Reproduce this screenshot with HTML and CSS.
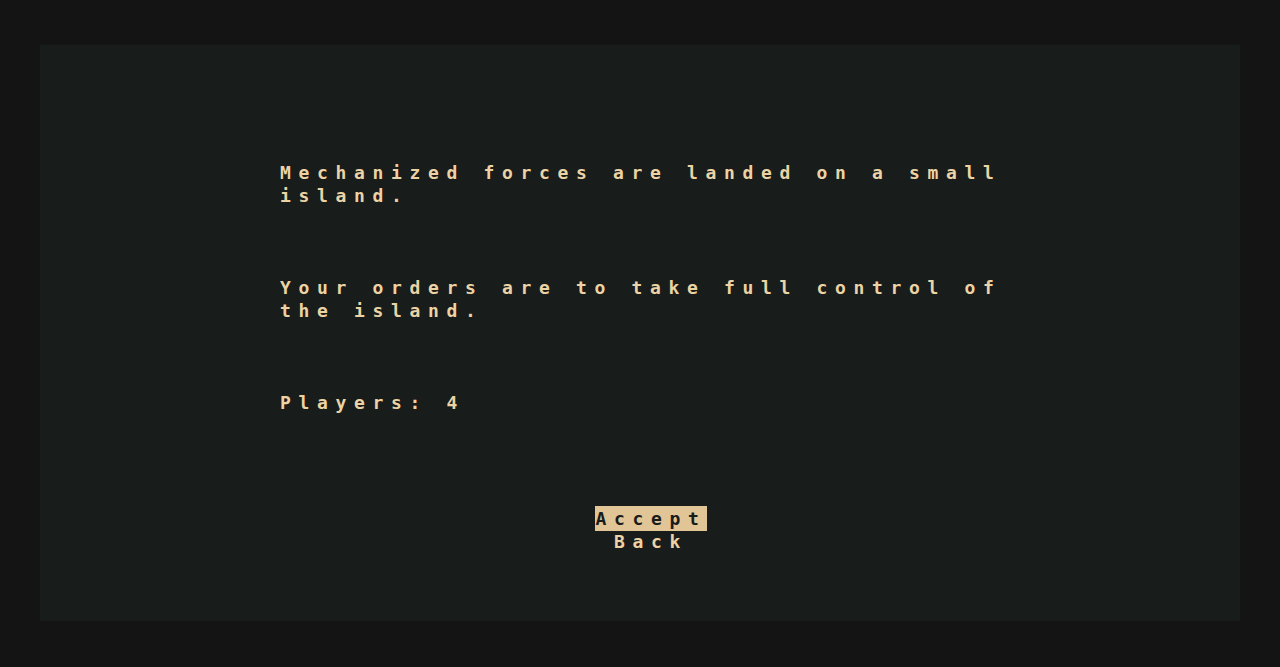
FILE: index.html
```html
<!DOCTYPE html>
<html lang="en">
<head>
<meta charset="utf-8">
<title>Briefing</title>
<link rel="stylesheet" href="styles.css">
</head>
<body>
<main class="screen">
  <section class="briefing">
    <p class="para">Mechanized forces are landed on a small island.</p>
    <p class="para">Your orders are to take full control of the island.</p>
    <p class="para">Players: 4</p>
    <nav class="menu">
      <span class="item selected">Accept</span>
      <span class="item back">Back</span>
    </nav>
  </section>
</main>
</body>
</html>
```
FILE: styles.css
```css
html, body {
  margin: 0;
  padding: 0;
  background: #141414;
}
body {
  width: 1280px;
  height: 667px;
  overflow: hidden;
  padding-top: 45px;
  box-sizing: border-box;
}
.screen {
  margin: 0 40px;
  height: 576px;
  background: #181c1a;
  box-sizing: border-box;
  padding: 116px 0 0 240px;
}
.briefing {
  width: 742px;
  font-family: "DejaVu Sans Mono", "Liberation Mono", monospace;
  font-size: 18px;
  font-weight: bold;
  line-height: 23px;
  letter-spacing: 7.66px;
  color: #ecd3a5;
}
.para {
  margin: 0 0 69px 0;
}
.para:nth-of-type(3) {
  margin-bottom: 92px;
}
.menu {
  display: flex;
  flex-direction: column;
  align-items: center;
}
.item {
  display: block;
  line-height: 23px;
}
.selected {
  background: #e2c596;
  color: #181c1a;
  line-height: 25px;
  padding: 0 1px;
}
.back {
  margin-top: -1px;
}
```
